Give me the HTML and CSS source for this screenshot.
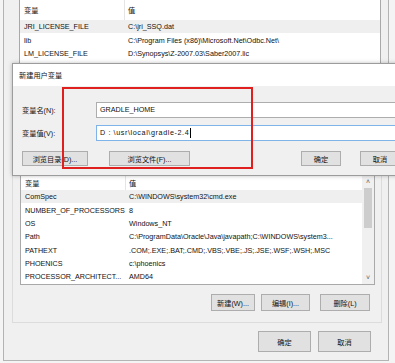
FILE: index.html
```html
<!DOCTYPE html>
<html lang="zh-CN">
<head>
    <meta charset="UTF-8">
    <meta name="viewport" content="width=device-width, initial-scale=1.0">
    <title>环境变量</title>
    <link rel="stylesheet" href="styles.css">
</head>
<body>
    <div class="screen">
        <div class="window">
            <!-- user variables list (mostly hidden by the dialog) -->
            <div class="list user-list">
                <div class="list-head"><span class="name">变量</span><span class="value">值</span></div>
                <div class="row selected"><span class="name">JRI_LICENSE_FILE</span><span class="value">C:\jri_SSQ.dat</span></div>
                <div class="row"><span class="name">lib</span><span class="value">C:\Program Files (x86)\Microsoft.Net\Odbc.Net\</span></div>
                <div class="row"><span class="name">LM_LICENSE_FILE</span><span class="value">D:\Synopsys\Z-2007.03\Saber2007.lic</span></div>
                <div class="row"><span class="name">Path</span><span class="value">%USERPROFILE%\AppData\Local\Microsoft\WindowsApps</span></div>
            </div>

            <!-- system variables -->
            <div class="group">
                <div class="list sys-list">
                    <div class="list-main">
                        <div class="list-head"><span class="name">变量</span><span class="value">值</span></div>
                        <div class="row selected"><span class="name">ComSpec</span><span class="value">C:\WINDOWS\system32\cmd.exe</span></div>
                        <div class="row"><span class="name">NUMBER_OF_PROCESSORS</span><span class="value">8</span></div>
                        <div class="row"><span class="name">OS</span><span class="value">Windows_NT</span></div>
                        <div class="row"><span class="name">Path</span><span class="value">C:\ProgramData\Oracle\Java\javapath;C:\WINDOWS\system3...</span></div>
                        <div class="row"><span class="name">PATHEXT</span><span class="value">.COM;.EXE;.BAT;.CMD;.VBS;.VBE;.JS;.JSE;.WSF;.WSH;.MSC</span></div>
                        <div class="row"><span class="name">PHOENICS</span><span class="value">c:\phoenics</span></div>
                        <div class="row"><span class="name">PROCESSOR_ARCHITECT...</span><span class="value">AMD64</span></div>
                    </div>
                    <div class="scrollbar">
                        <span class="arrow">&#708;</span>
                        <div class="thumb"></div>
                        <span class="arrow down">&#709;</span>
                    </div>
                </div>
                <div class="actions">
                    <button class="btn btn-new">新建(W)...</button>
                    <button class="btn btn-edit">编辑(I)...</button>
                    <button class="btn btn-del">删除(L)</button>
                </div>
            </div>

            <div class="footer">
                <button class="btn btn-big">确定</button>
                <button class="btn btn-big">取消</button>
            </div>
        </div>

        <!-- new user variable dialog -->
        <div class="dialog">
            <div class="dialog-title">新建用户变量</div>
            <div class="dialog-body">
                <div class="field">
                    <label class="field-label">变量名(N):</label>
                    <div class="input">GRADLE_HOME</div>
                </div>
                <div class="field">
                    <label class="field-label">变量值(V):</label>
                    <div class="input focused">D : \usr\local\gradle-2.4<span class="caret"></span></div>
                </div>
                <div class="dialog-buttons">
                    <button class="btn btn-dir">浏览目录(D)...</button>
                    <button class="btn btn-file">浏览文件(F)...</button>
                    <button class="btn btn-ok">确定</button>
                    <button class="btn btn-cancel">取消</button>
                </div>
            </div>
        </div>

        <div class="annotation"></div>
    </div>
</body>
</html>
```

FILE: styles.css
```css
* {
    box-sizing: border-box;
}

body {
    margin: 0;
    background: #fff;
    font-family: "Liberation Sans", "Noto Sans CJK SC", sans-serif;
    font-size: 7.2px;
    color: #111;
}

.screen {
    position: relative;
    width: 395px;
    height: 363px;
    overflow: hidden;
    background: #f4f4f4;
}

.window {
    display: flex;
    flex-direction: column;
    margin-left: 3px;
    width: 386px;
    height: 361px;
    background: #f0f0f0;
    border: 1px solid #b4b4b4;
    border-top: none;
}

/* lists */
.list {
    background: #fff;
    border: 1px solid #a9a9a9;
}

.user-list {
    margin-left: 15px;
    width: 362px;
    height: 100px;
    border-top: none;
}

.list-head,
.row {
    display: flex;
    align-items: center;
    white-space: nowrap;
}

.list-head {
    height: 20px;
}

.row {
    height: 13.35px;
}

.row.selected {
    background: #efefef;
}

.name {
    width: 104px;
    padding-left: 4px;
    overflow: hidden;
}

.value {
    padding-left: 4px;
}

.list-head .value {
    border-left: 1px solid #e5e5e5;
    height: 100%;
    display: flex;
    align-items: center;
    padding-left: 3px;
}

.group {
    margin-top: 65px;
    margin-left: 8px;
    width: 370px;
    border: 1px solid #dcdcdc;
    padding: 9px 6px 11px 7px;
}

.sys-list {
    display: flex;
    height: 110px;
}

.sys-list .list-head {
    height: 14px;
}

.list-main {
    flex: 1;
    overflow: hidden;
}

.scrollbar {
    width: 12px;
    display: flex;
    flex-direction: column;
    align-items: center;
    background: #f0f0f0;
}

.arrow {
    height: 12px;
    font-size: 7px;
    line-height: 12px;
    color: #606060;
}

.thumb {
    width: 8px;
    height: 40px;
    background: #cdcdcd;
}

.arrow.down {
    margin-top: auto;
}

/* buttons */
.btn {
    font: inherit;
    color: #111;
    background: #e1e1e1;
    border: 1px solid #adadad;
    padding: 0;
    height: 17px;
}

.actions {
    display: flex;
    justify-content: flex-end;
    margin-top: 9px;
    padding-right: 5px;
}

.btn-new {
    width: 44px;
}

.btn-edit {
    width: 49px;
    margin-left: 6px;
}

.btn-del {
    width: 50px;
    margin-left: 10px;
}

.footer {
    display: flex;
    justify-content: flex-end;
    gap: 7px;
    margin-top: 8px;
    padding-right: 17px;
}

.btn-big {
    width: 53px;
    height: 21px;
}

/* dialog */
.dialog {
    position: absolute;
    left: 12px;
    top: 63px;
    width: 400px;
    height: 113px;
    background: #f0f0f0;
    border: 1px solid #9c9c9c;
    box-shadow: 0 0 4px rgba(0, 0, 0, 0.25);
}

.dialog-title {
    height: 22px;
    line-height: 23px;
    padding-left: 6px;
    background: #fff;
}

.dialog-body {
    padding: 16px 0 0 9px;
}

.field {
    display: flex;
    align-items: center;
    margin-bottom: 7px;
}

.field-label {
    width: 74px;
}

.input {
    flex: 1;
    height: 16px;
    line-height: 14px;
    padding-left: 3px;
    background: #fff;
    border: 1px solid #adadad;
    border-right: none;
}

.input.focused {
    border-color: #7eb4ea;
    letter-spacing: 0.6px;
}

.caret {
    display: inline-block;
    width: 1px;
    height: 10px;
    margin-left: 1px;
    vertical-align: middle;
    background: #000;
}

.dialog-buttons {
    display: flex;
    margin-top: 10px;
}

.dialog-buttons .btn {
    height: 15px;
}

.btn-dir {
    width: 66px;
}

.btn-file {
    width: 81px;
    margin-left: 21px;
}

.btn-ok {
    width: 40px;
    margin-left: 111px;
}

.btn-cancel {
    width: 40px;
    margin-left: 19px;
}

/* red highlight drawn over the screenshot */
.annotation {
    position: absolute;
    left: 62px;
    top: 87px;
    width: 191px;
    height: 82px;
    border: 2px solid #e0201f;
}
```
